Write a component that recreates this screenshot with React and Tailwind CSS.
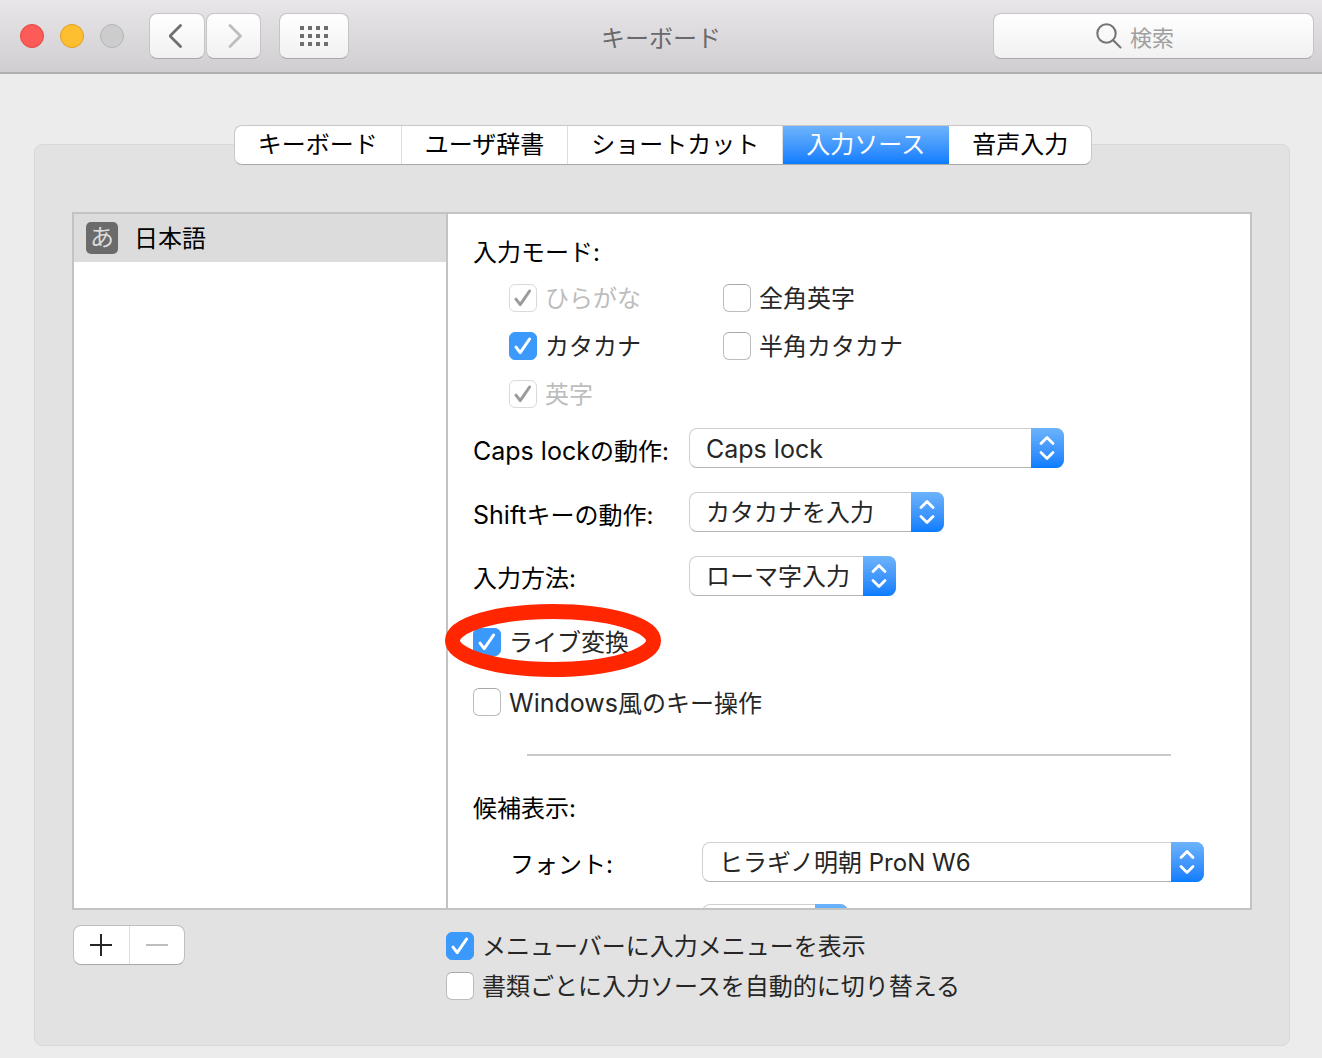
import { useState } from 'react'

const TABS = [
  { id: 'keyboard', label: 'キーボード' },
  { id: 'dictionary', label: 'ユーザ辞書' },
  { id: 'shortcut', label: 'ショートカット' },
  { id: 'source', label: '入力ソース' },
  { id: 'voice', label: '音声入力' },
]

const INPUT_MODES = [
  { id: 'hiragana', label: 'ひらがな', checked: true, disabled: true },
  { id: 'fullwidth', label: '全角英字', checked: false },
  { id: 'katakana', label: 'カタカナ', checked: true },
  { id: 'halfwidth', label: '半角カタカナ', checked: false },
  { id: 'alphabet', label: '英字', checked: true, disabled: true },
]

const BEHAVIOURS = [
  { id: 'caps', latin: 'Caps lock', label: 'の動作:', value: 'Caps lock', width: 'w-[375px]' },
  { id: 'shift', latin: 'Shift', label: 'キーの動作:', value: 'カタカナを入力', width: 'w-[255px]' },
  { id: 'method', label: '入力方法:', value: 'ローマ字入力', width: 'w-[207px]' },
]

const TOOL_BUTTON =
  'flex h-[46px] items-center justify-center rounded-lg border border-[#c6c4c7] border-b-[#a9a8aa] bg-linear-to-b from-white to-[#f1f1f1]'

// Latin letters run a touch larger than the kana beside them
function Latin({ children }) {
  return <span className="text-[25px]">{children}</span>
}

function Checkbox({ label, defaultChecked = false, disabled = false, children }) {
  const [checked, setChecked] = useState(defaultChecked)

  return (
    <label
      className={`relative flex h-7 w-fit items-center gap-2 whitespace-nowrap ${
        disabled ? 'text-[#bdbdbd]' : 'text-[#262626]'
      }`}
    >
      <span className="relative size-7 shrink-0">
        <input
          type="checkbox"
          checked={checked}
          disabled={disabled}
          onChange={(e) => setChecked(e.target.checked)}
          className={`block size-7 appearance-none rounded-md border ${
            disabled
              ? 'border-[#dadada] bg-white'
              : checked
                ? 'border-[#3b99fc] bg-[#3b99fc]'
                : 'border-[#bcbcbc] border-t-[#a8a8a8] bg-white'
          }`}
        />
        {checked && (
          <svg
            aria-hidden="true"
            viewBox="0 0 28 28"
            className={`pointer-events-none absolute inset-0 size-7 ${
              disabled ? 'text-[#9b9b9b]' : 'text-white'
            }`}
            fill="none"
            stroke="currentColor"
            strokeWidth="3"
            strokeLinecap="round"
            strokeLinejoin="round"
          >
            <path d="M7 15.2 11.2 20.6 20.6 7" />
          </svg>
        )}
      </span>
      <span className="pt-0.5">{label}</span>
      {children}
    </label>
  )
}

function PopUp({ id, value, width, textSize = 'text-[24px]', ...rest }) {
  return (
    <div className={`relative h-10 shrink-0 ${width}`}>
      <select
        id={id}
        {...rest}
        className={`h-10 w-full appearance-none rounded-lg border border-[#d0d0d0] border-b-[#b3b3b3] bg-white pl-4 pr-9 pt-0.5 text-[#262626] ${textSize}`}
      >
        <option>{value}</option>
      </select>
      <span className="pointer-events-none absolute inset-y-0 right-0 flex w-[33px] items-center justify-center rounded-r-lg bg-linear-to-b from-[#6cb3fa] to-[#077cff] pr-px">
        <svg
          aria-hidden="true"
          width="18"
          height="28"
          viewBox="0 0 18 28"
          fill="none"
          stroke="white"
          strokeWidth="2.8"
          strokeLinecap="round"
          strokeLinejoin="round"
        >
          <path d="M3 9.5 9 3.5 15 9.5M3 18.5 9 24.5 15 18.5" />
        </svg>
      </span>
    </div>
  )
}

function Toolbar() {
  return (
    <header className="grid h-[74px] grid-cols-[1fr_auto_1fr] items-center border-b-2 border-[#b1aeb2] bg-linear-to-b from-[#e9e6e9] to-[#d1ced2] px-2">
      <div className="flex items-center pl-3">
        <div className="flex gap-4">
          <button type="button" className="size-6 rounded-full border border-[#e2463f] bg-[#fc5b57]" />
          <button type="button" className="size-6 rounded-full border border-[#dfa023] bg-[#fdbe2f]" />
          <button type="button" disabled className="size-6 rounded-full border border-[#b5b4b6] bg-[#cdcccd]" />
        </div>
        <div className="ml-[25px] flex gap-px">
          <button type="button" className={`${TOOL_BUTTON} w-14 text-[#6e6e6e]`}>
            <svg aria-hidden="true" width="16" height="26" viewBox="0 0 16 26" fill="none" stroke="currentColor" strokeWidth="2.8" strokeLinecap="round" strokeLinejoin="round">
              <path d="M11.5 2.5 1 13 11.5 23.5" />
            </svg>
          </button>
          <button type="button" disabled className={`${TOOL_BUTTON} w-[55px] text-[#bdbdbd]`}>
            <svg aria-hidden="true" width="16" height="26" viewBox="0 0 16 26" fill="none" stroke="currentColor" strokeWidth="2.8" strokeLinecap="round" strokeLinejoin="round">
              <path d="M4 2.5 14.5 13 4 23.5" />
            </svg>
          </button>
        </div>
        <button type="button" className={`${TOOL_BUTTON} ml-[18px] w-[70px] text-[#6e6e6e]`}>
          <svg aria-hidden="true" width="28" height="20" viewBox="0 0 28 20" fill="currentColor">
            {[0, 8, 16].map((y) =>
              [0, 8, 16, 24].map((x) => (
                <rect key={`${x}-${y}`} x={x} y={y} width="4" height="4" />
              ))
            )}
          </svg>
        </button>
      </div>
      <h1 className="pt-1.5 text-[#69686a]">キーボード</h1>
      <label className={`${TOOL_BUTTON} w-[321px] gap-2 justify-self-end pl-[102px]`}>
        <svg aria-hidden="true" width="26" height="26" viewBox="0 0 26 26" fill="none" stroke="#757575" strokeWidth="2.1" strokeLinecap="round" className="shrink-0">
          <circle cx="10.5" cy="10.5" r="9.2" />
          <path d="M17.2 17.2 24.5 24.5" />
        </svg>
        <input
          type="search"
          placeholder="検索"
          className="min-w-0 flex-1 bg-transparent pt-1 text-[22px] outline-none placeholder:text-[#a0a0a0]"
        />
      </label>
    </header>
  )
}

function SourceOptions() {
  return (
    <section className="min-w-0 flex-1 bg-white pl-[25px] pt-[23px]">
      <h2>入力モード:</h2>
      <div className="ml-9 mt-[15px] grid grid-cols-[214px_1fr] gap-y-5">
        {INPUT_MODES.map((mode) => (
          <Checkbox
            key={mode.id}
            label={mode.label}
            defaultChecked={mode.checked}
            disabled={mode.disabled}
          />
        ))}
      </div>

      <div className="mt-5 flex flex-col gap-6">
        {BEHAVIOURS.map((item) => (
          <div key={item.id} className="flex h-10 items-center">
            <label htmlFor={item.id} className="w-[216px] shrink-0 whitespace-nowrap pt-1.5">
              {item.latin && <Latin>{item.latin}</Latin>}
              {item.label}
            </label>
            <PopUp
              id={item.id}
              value={item.value}
              width={item.width}
              textSize={item.id === 'caps' ? 'text-[25px]' : 'text-[24px]'}
            />
          </div>
        ))}
      </div>

      <div className="mt-8 flex flex-col gap-8">
        <Checkbox label="ライブ変換" defaultChecked>
          <svg
            aria-hidden="true"
            width="216"
            height="73"
            viewBox="0 0 216 73"
            className="pointer-events-none absolute -left-7 -top-6 max-w-none"
          >
            <ellipse cx="108" cy="36.5" rx="100.5" ry="29" fill="none" stroke="#ff2600" strokeWidth="15" />
          </svg>
        </Checkbox>
        <Checkbox label={<><Latin>Windows</Latin>風のキー操作</>} />
      </div>

      <hr className="ml-[54px] mr-[79px] mt-[38px] border-t-2 border-[#c9c9c9]" />

      <h2 id="candidates" className="mt-[37px]">候補表示:</h2>
      <div className="mt-[17px] flex h-10 items-center pl-[37px]">
        <label htmlFor="font" className="w-48 shrink-0 pt-1.5">フォント:</label>
        <PopUp id="font" value="ヒラギノ明朝 ProN W6" width="w-[502px]" />
      </div>
      <div className="mt-[22px] pl-[229px]">
        <PopUp id="size" value="" width="w-[146px]" aria-labelledby="candidates" />
      </div>
    </section>
  )
}

export default function App() {
  const [tab, setTab] = useState('source')

  return (
    <div
      lang="ja"
      className="min-h-screen bg-[#ececec] font-['Inter','Noto_Sans_CJK_JP',sans-serif] text-[24px] leading-8 text-black"
    >
      <Toolbar />

      <main className="pb-3 pl-[34px] pr-8 pt-[51px]">
        <nav className="relative flex justify-center pl-0.5">
          <div className="flex h-10 overflow-hidden rounded-lg border border-[#c8c8c8] border-b-[#a9a9a9] bg-white">
            {TABS.map((item) => (
              <button
                key={item.id}
                type="button"
                onClick={() => setTab(item.id)}
                className={`whitespace-nowrap border-r px-[23px] last:border-r-0 ${
                  tab === item.id
                    ? 'border-transparent bg-linear-to-b from-[#6cb3fa] to-[#077cff] bg-origin-border text-white'
                    : 'border-[#dedede]'
                }`}
              >
                {item.label}
              </button>
            ))}
          </div>
        </nav>

        <div className="-mt-[21px] rounded-lg border border-[#d9d9d9] bg-[#e2e2e2] px-[37px] pb-[45px] pt-[67px]">
          <div className="flex h-[698px] overflow-hidden border-2 border-[#c3c3c3]">
            <ul className="w-[374px] shrink-0 border-r-2 border-[#c3c3c3] bg-white">
              <li className="flex h-12 items-center gap-4 bg-[#dcdcdc] pl-3">
                <span className="flex size-8 items-center justify-center rounded-[5px] bg-[#6b6b6b] text-[#dcdcdc]">
                  あ
                </span>
                <span className="pt-0.5">日本語</span>
              </li>
            </ul>
            <SourceOptions />
          </div>

          <div className="flex pt-[15px]">
            <div className="w-[374px] shrink-0 pl-px">
              <div className="flex h-10 w-28 overflow-hidden rounded-lg border border-[#bfbfbf] border-b-[#a9a9a9] bg-white">
                <button type="button" className="flex flex-1 items-center justify-center border-r border-[#dedede] text-[#262626]">
                  <svg aria-hidden="true" width="22" height="22" viewBox="0 0 22 22" stroke="currentColor" strokeWidth="2">
                    <path d="M0 11H22M11 0V22" />
                  </svg>
                </button>
                <button type="button" disabled className="flex flex-1 items-center justify-center text-[#bdbdbd]">
                  <svg aria-hidden="true" width="22" height="22" viewBox="0 0 22 22" stroke="currentColor" strokeWidth="2">
                    <path d="M0 11H22" />
                  </svg>
                </button>
              </div>
            </div>
            <div className="flex flex-col gap-3 pt-[7px]">
              <Checkbox label="メニューバーに入力メニューを表示" defaultChecked />
              <Checkbox label="書類ごとに入力ソースを自動的に切り替える" />
            </div>
          </div>
        </div>
      </main>
    </div>
  )
}
